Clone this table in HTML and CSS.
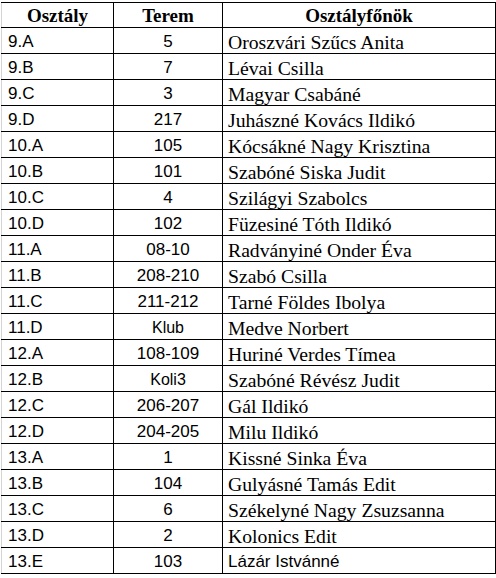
FILE: index.html
```html
<!DOCTYPE html>
<html lang="hu">
<head>
<meta charset="utf-8">
<title>Osztályok</title>
<link rel="stylesheet" href="styles.css">
</head>
<body>
<div class="sheet">
<table class="grid">
<colgroup><col class="c1"><col class="c2"><col class="c3"></colgroup>
<thead>
<tr><th>Osztály</th><th>Terem</th><th>Osztályfőnök</th></tr>
</thead>
<tbody>
<tr><td class="cls">9.A</td><td class="room">5</td><td class="name">Oroszvári Szűcs Anita</td></tr>
<tr><td class="cls">9.B</td><td class="room">7</td><td class="name">Lévai Csilla</td></tr>
<tr><td class="cls">9.C</td><td class="room">3</td><td class="name">Magyar Csabáné</td></tr>
<tr><td class="cls">9.D</td><td class="room">217</td><td class="name">Juhászné Kovács Ildikó</td></tr>
<tr><td class="cls">10.A</td><td class="room">105</td><td class="name">Kócsákné Nagy Krisztina</td></tr>
<tr><td class="cls">10.B</td><td class="room">101</td><td class="name">Szabóné Siska Judit</td></tr>
<tr><td class="cls">10.C</td><td class="room">4</td><td class="name">Szilágyi Szabolcs</td></tr>
<tr><td class="cls">10.D</td><td class="room">102</td><td class="name">Füzesiné Tóth Ildikó</td></tr>
<tr><td class="cls">11.A</td><td class="room">08-10</td><td class="name">Radványiné Onder Éva</td></tr>
<tr><td class="cls">11.B</td><td class="room">208-210</td><td class="name">Szabó Csilla</td></tr>
<tr><td class="cls">11.C</td><td class="room">211-212</td><td class="name">Tarné Földes Ibolya</td></tr>
<tr><td class="cls">11.D</td><td class="room small">Klub</td><td class="name">Medve Norbert</td></tr>
<tr><td class="cls">12.A</td><td class="room">108-109</td><td class="name">Huriné Verdes Tímea</td></tr>
<tr><td class="cls">12.B</td><td class="room small">Koli3</td><td class="name">Szabóné Révész Judit</td></tr>
<tr><td class="cls">12.C</td><td class="room">206-207</td><td class="name">Gál Ildikó</td></tr>
<tr><td class="cls">12.D</td><td class="room">204-205</td><td class="name">Milu Ildikó</td></tr>
<tr><td class="cls">13.A</td><td class="room">1</td><td class="name">Kissné Sinka Éva</td></tr>
<tr><td class="cls">13.B</td><td class="room">104</td><td class="name">Gulyásné Tamás Edit</td></tr>
<tr><td class="cls">13.C</td><td class="room">6</td><td class="name">Székelyné Nagy Zsuzsanna</td></tr>
<tr><td class="cls">13.D</td><td class="room">2</td><td class="name">Kolonics Edit</td></tr>
<tr><td class="cls">13.E</td><td class="room">103</td><td class="name sans">Lázár Istvánné</td></tr>
</tbody>
</table>
</div>
</body>
</html>
```
FILE: styles.css
```css
html, body {
  margin: 0;
  padding: 0;
  background: #ffffff;
}

.sheet {
  padding-top: 2px;
  padding-left: 1px;
}

.grid {
  border-collapse: collapse;
  table-layout: fixed;
  width: 494px;
  color: #000000;
}

.c1 { width: 112px; }
.c2 { width: 109px; }
.c3 { width: 273px; }

.grid th,
.grid td {
  border: 1px solid #000000;
  padding: 0;
  height: 24px;
  vertical-align: bottom;
  white-space: nowrap;
  overflow: hidden;
}

.grid th:first-child,
.grid td:first-child {
  border-left: 1px solid #d4d4d4;
}

.grid th {
  font-family: "Liberation Serif", "Times New Roman", serif;
  font-weight: bold;
  font-size: 19px;
  line-height: 22px;
  text-align: center;
}

.cls {
  font-family: "Liberation Sans", Arial, sans-serif;
  font-size: 17px;
  line-height: 20px;
  padding-left: 6px !important;
  padding-bottom: 1px !important;
  text-align: left;
}

.room {
  font-family: "Liberation Sans", Arial, sans-serif;
  font-size: 17px;
  line-height: 20px;
  padding-bottom: 1px !important;
  text-align: center;
}

.room.small {
  font-size: 16px;
}

.name {
  font-family: "Liberation Serif", "Times New Roman", serif;
  font-size: 19.7px;
  line-height: 22px;
  padding-left: 5px !important;
  text-align: left;
}

.name.sans {
  font-family: "Liberation Sans", Arial, sans-serif;
  font-size: 17px;
  line-height: 20px;
  padding-bottom: 1px !important;
}
```
